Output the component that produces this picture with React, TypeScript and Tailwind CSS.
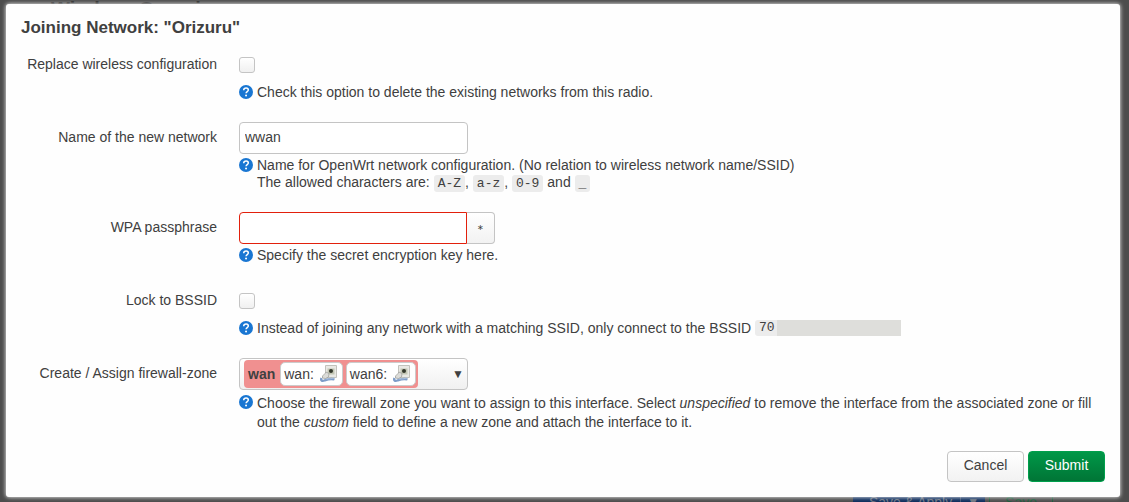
import { useState, type ReactNode } from "react";

function HelpIcon() {
  return (
    <svg viewBox="0 0 14 14" className="mt-px size-3.5 shrink-0" aria-hidden="true">
      <circle cx="7" cy="7" r="7" fill="#1976d2" />
      <path d="M4.700 5.200C4.800 3.800 5.800 3.100 7.100 3.100c1.300 0 2.200.8 2.200 1.900 0 1.500-2.100 1.600-2.200 3.200" fill="none" stroke="#fff" strokeWidth="1.500" />
      <circle cx="7.050" cy="10.400" r="1" fill="#fff" />
    </svg>
  );
}

function Help({ children, tall }: { children: ReactNode; tall?: boolean }) {
  return (
    <div className={tall ? "mt-1 flex gap-1 leading-[19px]" : "mt-[3px] flex gap-1 leading-[17px]"}>
      <HelpIcon />
      <div>{children}</div>
    </div>
  );
}

function Row({ id, label, children }: { id: string; label: string; children: ReactNode }) {
  return (
    <div className="flex gap-[22px]">
      <label htmlFor={id} className="w-[196px] shrink-0 text-right leading-[30px]">
        {label}
      </label>
      <div className="min-w-0 flex-1">{children}</div>
    </div>
  );
}

function Check({ id }: { id: string }) {
  return (
    <div className="flex h-8 items-center">
      <input
        id={id}
        type="checkbox"
        className="size-4 appearance-none rounded-[3px] border border-[#c4c4c4] bg-linear-to-b from-white to-[#f0f0f0] checked:bg-[#1976d2]"
      />
    </div>
  );
}

function Code({ children }: { children: ReactNode }) {
  return (
    <code className="rounded-[3px] bg-[#ececec] px-1 py-px font-['Liberation_Mono',monospace] text-[13px] leading-none">
      {children}
    </code>
  );
}

function AdapterIcon() {
  return (
    <svg viewBox="0 0 18 18" className="size-[18px]" aria-hidden="true">
      <path d="M5.500.5h11v12h-11z" fill="#e9e9e4" stroke="#c2c2bc" />
      <path d="M7.500 3.500h7v6h-7z" fill="#c3c6b4" />
      <circle cx="11" cy="6" r="2" fill="#33382b" />
      <path d="M1.500 13c-1 2.500.5 3.500 3 2.500 3-1.200 6-2.500 10-1" fill="none" stroke="#7d9cc8" strokeWidth="2.400" />
      <path d="M5 13.500c2 1 5 .5 9-.5" fill="none" stroke="#a9bfdd" strokeWidth="1.200" />
      <path d="M2.500 11l2.500-2.500 1-1.500 3 1.500-.5 3.500-3 1.500-3-.5z" fill="#dcdcd8" stroke="#9fa19d" strokeWidth=".8" />
    </svg>
  );
}

function Interface({ name }: { name: string }) {
  return (
    <span className="flex h-6 items-center gap-1.5 rounded-[5px] border border-[#ccc] bg-white pr-1 pl-[3px]">
      {name}:
      <AdapterIcon />
    </span>
  );
}

export default function App() {
  const [name, setName] = useState("wwan");
  const [key, setKey] = useState("");
  const [visible, setVisible] = useState(false);

  return (
    <div className="relative h-screen min-h-fit overflow-hidden bg-[#4d4d4d] pt-1 pr-[9px] pb-[5px] pl-1.5 font-['Liberation_Sans',sans-serif] text-sm text-[#404040]">
      <div aria-hidden="true" className="absolute -top-[5px] left-[51px] text-[20px] leading-7 font-bold text-[#222]">
        Wireless Overview
      </div>
      <div aria-hidden="true" className="absolute top-[486px] right-[76px] flex h-8 gap-1 leading-8">
        <span className="flex gap-2 rounded bg-[#102f5e] pr-1.5 pl-4 text-[#6c7480]">
          Save &amp; Apply
          <span className="border-l border-[#3f5375] pl-1.5 text-xs leading-8">▼</span>
        </span>
        <span className="rounded border border-[#1c5c3b] px-[15px] leading-[30px] text-[#1c5c3b]">Save</span>
      </div>

      <form
        onSubmit={(e) => e.preventDefault()}
        className="relative rounded-[3px] bg-[#fefefe] px-[15px] pt-3 pb-[15px] shadow-[0_0_4px_#fff]"
      >
        <h4 className="mb-[9px] text-[17px] leading-6 font-bold">Joining Network: "Orizuru"</h4>

        <div className="flex flex-col gap-[21px]">
          <Row id="replace" label="Replace wireless configuration">
            <Check id="replace" />
            <Help>Check this option to delete the existing networks from this radio.</Help>
          </Row>

          <Row id="name" label="Name of the new network">
            <input
              id="name"
              value={name}
              onChange={(e) => setName(e.target.value)}
              className="block h-8 w-[229px] rounded-[4px] border border-[#c4c4c4] bg-white px-[5px] pb-0.5 outline-none"
            />
            <Help>
              Name for OpenWrt network configuration. (No relation to wireless network name/SSID)
              <br />
              The allowed characters are: <Code>A-Z</Code>, <Code>a-z</Code>, <Code>0-9</Code> and <Code>_</Code>
            </Help>
          </Row>

          <Row id="key" label="WPA passphrase">
            <div className="flex h-8">
              <input
                id="key"
                type={visible ? "text" : "password"}
                value={key}
                onChange={(e) => setKey(e.target.value)}
                className="w-[228px] rounded-l-[4px] border border-[#e2200c] bg-white px-[5px] outline-none"
              />
              <button
                type="button"
                onClick={() => setVisible(!visible)}
                aria-label="Reveal passphrase"
                className="w-7 rounded-r-[4px] border border-l-0 border-[#c4c4c4] bg-linear-to-b from-white to-[#f2f2f2] text-[8px]"
              >
                ∗
              </button>
            </div>
            <Help>Specify the secret encryption key here.</Help>
          </Row>

          <Row id="bssid" label="Lock to BSSID">
            <Check id="bssid" />
            <Help>
              Instead of joining any network with a matching SSID, only connect to the BSSID{" "}
              <code className="inline-flex h-4 rounded-l-[3px] bg-[#ececec] pl-1 align-top font-['Liberation_Mono',monospace] text-[13px] leading-4">
                70
                <span className="ml-0.5 w-[124px] bg-[#dededb]" />
              </code>
            </Help>
          </Row>

          <Row id="zone" label="Create / Assign firewall-zone">
            <button
              id="zone"
              type="button"
              className="flex h-8 w-[229px] items-center justify-between rounded-[4px] border border-[#c4c4c4] bg-linear-to-b from-white to-[#f0f0f0] pr-[3px] pl-1"
            >
              <span className="flex h-7 items-center gap-[3px] rounded-[4px] bg-[#f09090] pr-0.5 pl-1">
                <strong className="mr-0.5">wan</strong>
                <Interface name="wan" />
                <Interface name="wan6" />
              </span>
              <span className="text-xs">▼</span>
            </button>
            <Help tall>
              Choose the firewall zone you want to assign to this interface. Select <em>unspecified</em> to remove the
              interface from the associated zone or fill out the <em>custom</em> field to define a new zone and attach
              the interface to it.
            </Help>
          </Row>
        </div>

        <div className="mt-[19px] flex justify-end gap-1">
          <button
            type="button"
            className="h-[31px] min-w-[77px] rounded-[4px] border border-[#c4c4c4] bg-linear-to-b from-white to-[#f2f2f2] pb-[3px]"
          >
            Cancel
          </button>
          <button
            type="submit"
            className="h-[31px] min-w-[77px] rounded-[4px] border border-[#00a04c] bg-linear-to-b from-[#009848] to-[#007536] pb-[3px] text-white"
          >
            Submit
          </button>
        </div>
      </form>
    </div>
  );
}
